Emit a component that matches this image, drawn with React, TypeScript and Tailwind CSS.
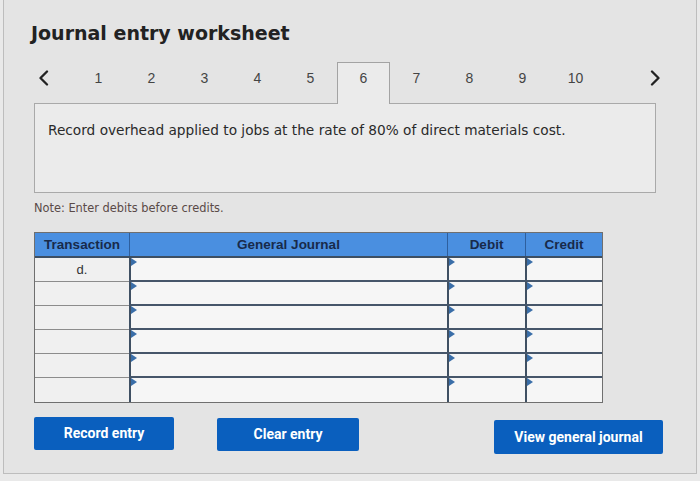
const tabs = [1, 2, 3, 4, 5, 6, 7, 8, 9, 10]
const rows = ['d.', '', '', '', '', '']

function Flag() {
  return (
    <svg className="absolute left-0 top-0" width="6" height="8" viewBox="0 0 6 8">
      <path d="M0 0 L6 4 L0 8 Z" fill="#3a6ea8" />
    </svg>
  )
}

function Chevron({ dir }: { dir: 'left' | 'right' }) {
  return (
    <svg width="11" height="16" viewBox="0 0 11 16" fill="none" stroke="#222" strokeWidth={2.3} strokeLinecap="round" strokeLinejoin="round">
      {dir === 'left' ? <polyline points="9,1.5 2.5,8 9,14.5" /> : <polyline points="2,1.5 8.5,8 2,14.5" />}
    </svg>
  )
}

export default function App() {
  return (
    <div className="w-[700px] h-[481px] bg-[#e9e9e9] pl-[3px] pt-0">
      <div className="w-[694px] h-[474px] bg-[#e4e4e4] border-l border-r border-b border-[#bdbdbd] font-['DejaVu_Sans',sans-serif] text-[#333]">
        {/* Title */}
        <h1 className="pl-[27px] pt-[20px] text-[19px] leading-[26px] font-bold text-[#222]">
          Journal entry worksheet
        </h1>

        {/* Tabs */}
        <div className="mt-[16px] ml-[30px] mr-[32px] flex items-end h-[41px] font-['Liberation_Sans',Arial,sans-serif]">
          <div className="w-[38px] h-full flex items-center pb-[9px] pl-[4px]">
            <Chevron dir="left" />
          </div>
          {tabs.map((t) =>
            t === 6 ? (
              <div
                key={t}
                className="w-[53px] h-[42px] -mb-px relative z-10 flex items-center justify-center pb-[10px] bg-[#ebebeb] border border-b-0 border-[#a3a3a3] text-[14px] text-[#444]"
              >
                {t}
              </div>
            ) : (
              <div key={t} className="w-[53px] h-full flex items-center justify-center pb-[9px] text-[14px] text-[#444]">
                {t}
              </div>
            )
          )}
          <div className="flex-1 h-full flex items-center justify-end pb-[9px] pr-[3px]">
            <Chevron dir="right" />
          </div>
        </div>

        {/* Question box */}
        <div className="ml-[30px] w-[622px] h-[90px] bg-[#ebebeb] border border-[#a9a9a9] pl-[13px] pt-[16px]">
          <p className="text-[13.7px] leading-[20px] text-[#2a2a2a]">
            Record overhead applied to jobs at the rate of 80% of direct materials cost.
          </p>
        </div>

        {/* Note */}
        <p className="ml-[30px] mt-[7px] text-[11.4px] leading-[16px] text-[#5a4a48]">
          Note: Enter debits before credits.
        </p>

        {/* Journal table */}
        <div className="ml-[30px] mt-[16px] w-[569px] border border-[#6f6f6f] font-['Liberation_Sans',Arial,sans-serif]">
          <div className="grid grid-cols-[94px_318px_78px_77px] h-[25px] bg-[#4a8fe0] text-[13.5px] font-bold text-[#182a4a] border-b-2 border-[#3d4f63]">
            <div className="flex items-center justify-center pt-[1px]">Transaction</div>
            <div className="flex items-center justify-center pt-[1px] border-l border-[#2e5f9e]">General Journal</div>
            <div className="flex items-center justify-center pt-[1px] border-l border-[#2e5f9e]">Debit</div>
            <div className="flex items-center justify-center pt-[1px] border-l border-[#2e5f9e]">Credit</div>
          </div>
          {rows.map((r, i) => (
            <div
              key={i}
              className={`grid grid-cols-[94px_318px_78px_77px] h-[24px] ${i < rows.length - 1 ? 'border-b-2 border-[#46566a]' : ''}`}
            >
              <div className={`bg-[#f0f0f0] flex items-start justify-center pt-[2px] text-[13px] text-[#333] ${i < rows.length - 1 ? '-mb-[2px] border-b border-[#8c8c8c]' : ''}`}>
                {r}
              </div>
              <div className="relative bg-[#f6f6f6] border-l-2 border-[#3f5063]">
                <Flag />
              </div>
              <div className="relative bg-[#f6f6f6] border-l-2 border-[#3f5063]">
                <Flag />
              </div>
              <div className="relative bg-[#f6f6f6] border-l-2 border-[#3f5063]">
                <Flag />
              </div>
            </div>
          ))}
        </div>

        {/* Buttons */}
        <div className="ml-[30px] mt-[14px] flex items-start font-['Roboto',sans-serif]">
          <button className="w-[140px] h-[33px] bg-[#0a5fbe] rounded-[2px] text-white text-[14px] font-bold">
            Record entry
          </button>
          <button className="ml-[43px] mt-[1px] w-[142px] h-[33px] bg-[#0a5fbe] rounded-[2px] text-white text-[14px] font-bold">
            Clear entry
          </button>
          <button className="ml-[135px] mt-[3px] w-[169px] h-[34px] bg-[#0a5fbe] rounded-[2px] text-white text-[14px] font-bold">
            View general journal
          </button>
        </div>
      </div>
    </div>
  )
}
